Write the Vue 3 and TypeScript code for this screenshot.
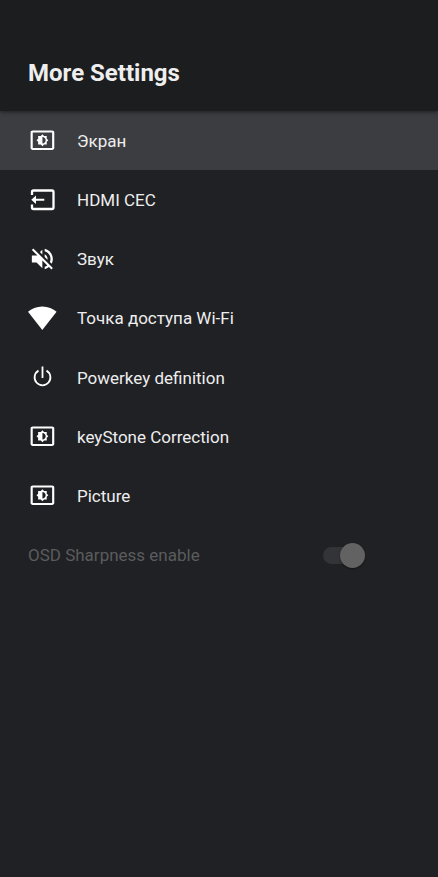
<script setup lang="ts">
import { ref } from 'vue'

type IconName = 'display' | 'input' | 'mute' | 'wifi' | 'power'

interface MenuItem {
  id: string
  label: string
  icon: IconName
}

const items: MenuItem[] = [
  { id: 'screen', label: 'Экран', icon: 'display' },
  { id: 'cec', label: 'HDMI CEC', icon: 'input' },
  { id: 'sound', label: 'Звук', icon: 'mute' },
  { id: 'hotspot', label: 'Точка доступа Wi-Fi', icon: 'wifi' },
  { id: 'powerkey', label: 'Powerkey definition', icon: 'power' },
  { id: 'keystone', label: 'keyStone Correction', icon: 'display' },
  { id: 'picture', label: 'Picture', icon: 'display' },
]

const selected = ref('screen')
const sharpness = ref(true)
</script>

<template>
  <main class="panel">
    <header class="header">
      <h1 class="title">More Settings</h1>
    </header>
    <ul class="list">
      <li v-for="item in items" :key="item.id" class="cell">
        <button
          type="button"
          class="row"
          :class="{ active: selected === item.id }"
          @click="selected = item.id"
        >
          <svg v-if="item.icon === 'display'" class="icon" viewBox="-1.4 -0.3 26 26" aria-hidden="true">
            <path d="M21 3H3c-1.1 0-2 .7-2 1.700v14.600c0 1 .9 1.700 2 1.700h18c1.1 0 2-.7 2-1.700V4.700c0-1-.9-1.700-2-1.700zm0 16.200H3V4.800h18v14.400zM8 16h2.500l1.500 1.500 1.500-1.500H16v-2.500l1.500-1.500-1.500-1.500V8h-2.500L12 6.500 10.500 8H8v2.500L6.500 12 8 13.500V16zm4-7c1.660 0 3 1.340 3 3s-1.340 3-3 3V9z" />
          </svg>
          <svg v-else-if="item.icon === 'input'" class="icon" viewBox="0 0 28 28" aria-hidden="true">
            <path class="line bold" d="M4 9V6q0-1.500 1.500-1.500H24q1.500 0 1.500 1.500V21.500q0 1.500-1.500 1.500H5.500q-1.500 0-1.500-1.500V18.500" />
            <path d="M3.300 13.700L8 9.500V12.800H16.300V14.700H8V18z" />
          </svg>
          <svg v-else-if="item.icon === 'mute'" class="icon" viewBox="-0.3 0 24 24" aria-hidden="true">
            <path d="M16.500 12c0-1.770-1.020-3.290-2.500-4.030v2.210l2.450 2.450c.03-.2.050-.410.050-.630zm2.500 0c0 .940-.2 1.820-.540 2.640l1.510 1.510C20.630 14.910 21 13.500 21 12c0-4.280-2.990-7.860-7-8.770v2.060c2.890.860 5 3.540 5 6.710zM4.270 3L3 4.270 7.730 9H3v6h4l5 5v-6.730l4.250 4.250c-.670.520-1.420.930-2.250 1.180v2.060c1.380-.310 2.630-.950 3.690-1.810L19.730 21 21 19.730l-9-9L4.270 3zM12 4L9.910 6.090 12 8.180V4z" />
          </svg>
          <svg v-else-if="item.icon === 'wifi'" class="icon" viewBox="0 0 28 28" aria-hidden="true">
            <path d="M14.300 26L0 7.800C3.500 4.500 8.500 2.400 14.300 2.400S25.100 4.500 28.600 7.800z" />
          </svg>
          <svg v-else class="icon" viewBox="0 0 28 28" aria-hidden="true">
            <path class="line" d="M14.500 2.500V14M10.500 6.600A7.900 7.900 0 1 0 18.500 6.600" />
          </svg>
          <span>{{ item.label }}</span>
        </button>
      </li>
      <li class="cell">
        <label class="row disabled" for="sharpness">
          <span>OSD Sharpness enable</span>
          <input id="sharpness" v-model="sharpness" class="switch" type="checkbox" role="switch" disabled />
        </label>
      </li>
    </ul>
  </main>
</template>

<style>
html,
body {
  background: #202124;
}
</style>

<style scoped>
.panel {
  min-height: 100vh;
  background: #202124;
  color: #eeeeef;
  font-family: Roboto, "Noto Sans", sans-serif;
}

.header {
  position: relative;
  padding: 57px 28px 22px;
  background: #1c1d1e;
  box-shadow: 0 1px 4px rgba(0, 0, 0, 0.5);
}

.title {
  margin: 0;
  font-size: 24px;
  line-height: 32px;
  font-weight: 700;
}

.list {
  display: grid;
  grid-auto-rows: 1fr;
  min-height: 474px;
  margin: 0;
  padding: 0;
  list-style: none;
}

.cell {
  display: flex;
}

.row {
  display: flex;
  flex: 1;
  align-items: center;
  gap: 21px;
  margin: 0;
  padding: 0 28px;
  border: 0;
  background: transparent;
  color: inherit;
  font: inherit;
  font-size: 17px;
  line-height: 24px;
  text-align: left;
}

.row.active {
  background: #3c3d40;
}

.row.disabled {
  justify-content: space-between;
  padding-right: 73px;
  color: #5b5c5e;
}

.icon {
  flex: none;
  width: 28px;
  height: 28px;
  overflow: visible;
  fill: #ffffff;
}

.line {
  fill: none;
  stroke: #ffffff;
  stroke-width: 1.8;
}

.line.bold {
  stroke-width: 2.3;
}

.switch {
  display: flex;
  align-items: center;
  justify-content: flex-end;
  appearance: none;
  width: 42px;
  height: 17px;
  margin: 0;
  border-radius: 9px;
  background: #333437;
}

.switch::before {
  content: "";
  width: 25px;
  height: 25px;
  flex: none;
  border-radius: 50%;
  background: #626262;
  box-shadow: 0 1px 2px rgba(0, 0, 0, 0.4);
}
</style>
